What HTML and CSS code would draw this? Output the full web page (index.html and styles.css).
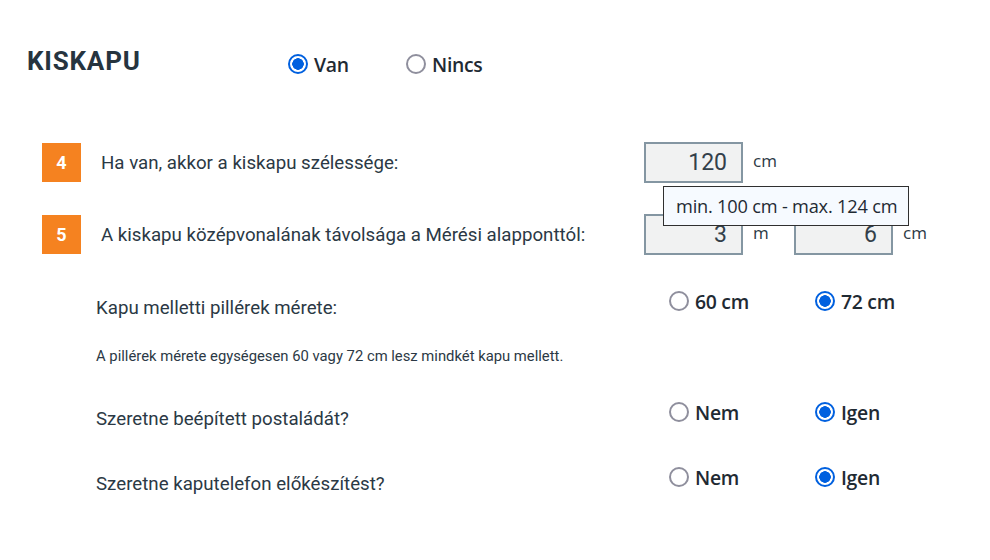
FILE: index.html
```html
<!DOCTYPE html>
<html lang="hu">
<head>
<meta charset="utf-8">
<title>Kiskapu</title>
<link rel="stylesheet" href="styles.css">
</head>
<body>
<div class="page">
  <div class="head">
    <h2 class="title">KISKAPU</h2>
    <div class="opts head-opts">
      <label class="radio"><span class="dot on"></span>Van</label>
      <label class="radio"><span class="dot"></span>Nincs</label>
    </div>
  </div>

  <div class="qrow q4">
    <span class="num">4</span>
    <span class="qlabel">Ha van, akkor a kiskapu szélessége:</span>
    <div class="fields">
      <div class="field">
        <div class="input">120</div>
        <span class="unit">cm</span>
        <div class="tip">min. 100 cm - max. 124 cm</div>
      </div>
    </div>
  </div>

  <div class="qrow q5">
    <span class="num">5</span>
    <span class="qlabel">A kiskapu középvonalának távolsága a Mérési alapponttól:</span>
    <div class="fields">
      <div class="field">
        <div class="input">3</div>
        <span class="unit">m</span>
      </div>
      <div class="field">
        <div class="input">6</div>
        <span class="unit">cm</span>
      </div>
    </div>
  </div>

  <div class="srow pillars">
    <span class="slabel">Kapu melletti pillérek mérete:</span>
    <div class="opts">
      <label class="radio"><span class="dot"></span>60 cm</label>
      <label class="radio"><span class="dot on"></span>72 cm</label>
    </div>
  </div>
  <p class="note">A pillérek mérete egységesen 60 vagy 72 cm lesz mindkét kapu mellett.</p>

  <div class="srow post">
    <span class="slabel">Szeretne beépített postaládát?</span>
    <div class="opts">
      <label class="radio"><span class="dot"></span>Nem</label>
      <label class="radio"><span class="dot on"></span>Igen</label>
    </div>
  </div>

  <div class="srow phone">
    <span class="slabel">Szeretne kaputelefon előkészítést?</span>
    <div class="opts">
      <label class="radio"><span class="dot"></span>Nem</label>
      <label class="radio"><span class="dot on"></span>Igen</label>
    </div>
  </div>
</div>
</body>
</html>
```

FILE: styles.css
```css
* { box-sizing: border-box; }
html, body { margin: 0; padding: 0; background: #fff; }
body {
  font-family: Roboto, "Liberation Sans", sans-serif;
  color: #2b3945;
  width: 990px;
  height: 560px;
  overflow: hidden;
}
.page { padding-top: 44px; }

.head {
  display: flex;
  align-items: center;
  padding-left: 27px;
  height: 40px;
}
.title {
  margin: -6px 0 0 0;
  width: 261px;
  font-size: 26px;
  font-weight: 700;
  letter-spacing: 0.8px;
  color: #26343f;
  line-height: 1;
}
.opts { display: flex; }
.radio {
  display: flex;
  align-items: center;
  height: 26px;
  font-family: "Open Sans", "Noto Sans", sans-serif;
  font-weight: 600;
  font-size: 19.4px;
  color: #1f2a33;
  letter-spacing: -0.3px;
}
.head-opts .radio:first-child { width: 118px; }
.dot {
  width: 20px;
  height: 20px;
  border-radius: 50%;
  border: 2px solid #8f8f9d;
  background: #fff;
  margin-right: 6px;
  flex: none;
}
.dot.on {
  border-color: #0060df;
  background: radial-gradient(circle, #0060df 0 5.5px, #fff 6px);
}

.qrow {
  display: flex;
  align-items: center;
  padding-left: 42px;
  height: 41px;
}
.q4 { margin-top: 58px; }
.q5 { margin-top: 31px; }
.num {
  width: 39px;
  height: 39px;
  background: #f58220;
  color: #fff;
  font-weight: 700;
  font-size: 18px;
  display: flex;
  align-items: center;
  justify-content: center;
  flex: none;
}
.qlabel {
  margin-left: 20px;
  width: 543px;
  font-size: 18.7px;
}
.fields { display: flex; }
.field {
  position: relative;
  display: flex;
  align-items: flex-start;
  width: 150px;
  height: 41px;
}
.input {
  width: 99px;
  height: 41px;
  border: 2px solid #8496a2;
  background: #f1f2f2;
  font-size: 23px;
  text-align: right;
  padding: 5px 14px 0 0;
  color: #33404a;
  line-height: 28px;
}
.unit {
  margin-left: 10px;
  margin-top: 7px;
  font-size: 17px;
  font-family: "Open Sans", sans-serif;
}
.tip {
  position: absolute;
  left: 19px;
  top: 44px;
  width: 246px;
  height: 40px;
  border: 1px solid #2f2f2f;
  background: #f6faff;
  font-family: "Open Sans", "Noto Sans", sans-serif;
  font-size: 18.2px;
  color: #1f2a33;
  padding: 0 0 0 12px;
  line-height: 38px;
  white-space: nowrap;
  z-index: 2;
  letter-spacing: -0.2px;
}

.srow {
  display: flex;
  align-items: flex-start;
  padding-left: 96px;
  height: 26px;
}
.slabel {
  width: 573px;
  font-size: 18.7px;
  line-height: 22px;
  padding-top: 9px;
}
.srow .radio:first-child { width: 146px; }
.pillars { margin-top: 33px; }
.note {
  margin: 33px 0 0 96px;
  font-size: 14.8px;
  line-height: 18px;
}
.post { margin-top: 34px; }
.phone { margin-top: 39px; }
```
